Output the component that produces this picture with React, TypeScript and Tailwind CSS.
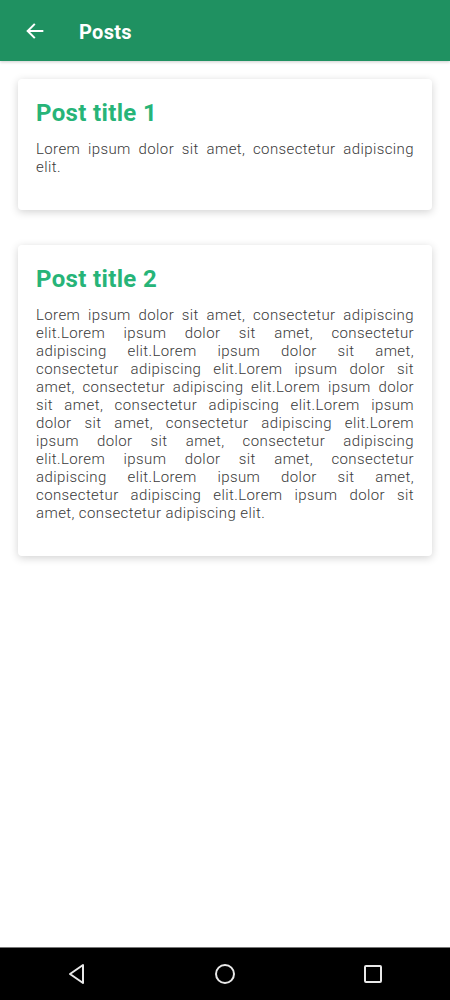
const lorem = "Lorem ipsum dolor sit amet, consectetur adipiscing elit.";

const posts = [
  { title: "Post title 1", body: lorem },
  { title: "Post title 2", body: Array(10).fill(lorem).join("") },
];

export default function App() {
  return (
    <div className="w-[450px] h-[1000px] flex flex-col bg-white" style={{ fontFamily: "Roboto, 'Noto Sans', sans-serif" }}>
      <header className="h-[61px] bg-[#1f9161] flex items-center shrink-0 shadow-[0_1px_3px_rgba(0,0,0,0.2)]">
        <svg className="ml-[24px]" width="22" height="22" viewBox="0 0 24 24" fill="none" stroke="white" strokeWidth="2.2" strokeLinecap="square">
          <path d="M20 12H5" />
          <path d="M11 5l-7 7 7 7" />
        </svg>
        <h1 className="ml-[33px] mt-[2px] text-white text-[20px] font-bold tracking-[0.3px]">Posts</h1>
      </header>
      <main className="flex-1 flex flex-col gap-[35px] px-[18px] pt-[18px]">
        {posts.map((p) => (
          <div key={p.title} className="bg-white rounded-[4px] shadow-[0_2px_8px_rgba(0,0,0,0.18)] px-[18px] pt-[18px] pb-[34px]">
            <h2 className="text-[24px] leading-[32px] font-bold text-[#27b478] tracking-[0.35px]">{p.title}</h2>
            <p className="mt-[11px] text-[15px] leading-[18px] font-light text-[#3a3a3a] text-justify tracking-[0.4px]">{p.body}</p>
          </div>
        ))}
      </main>
      <nav className="h-[53px] bg-black shrink-0 flex items-center justify-center gap-[126px] border-t border-[#777]">
        <svg width="22" height="22" viewBox="0 0 22 22" fill="none" stroke="#e8e8e8" strokeWidth="2">
          <path d="M17 2v18L4 11z" strokeLinejoin="round" />
        </svg>
        <svg width="22" height="22" viewBox="0 0 22 22" fill="none" stroke="#e8e8e8" strokeWidth="2">
          <circle cx="11" cy="11" r="9" />
        </svg>
        <svg width="22" height="22" viewBox="0 0 22 22" fill="none" stroke="#e8e8e8" strokeWidth="2">
          <rect x="3" y="3" width="16" height="16" rx="1" />
        </svg>
      </nav>
    </div>
  );
}
